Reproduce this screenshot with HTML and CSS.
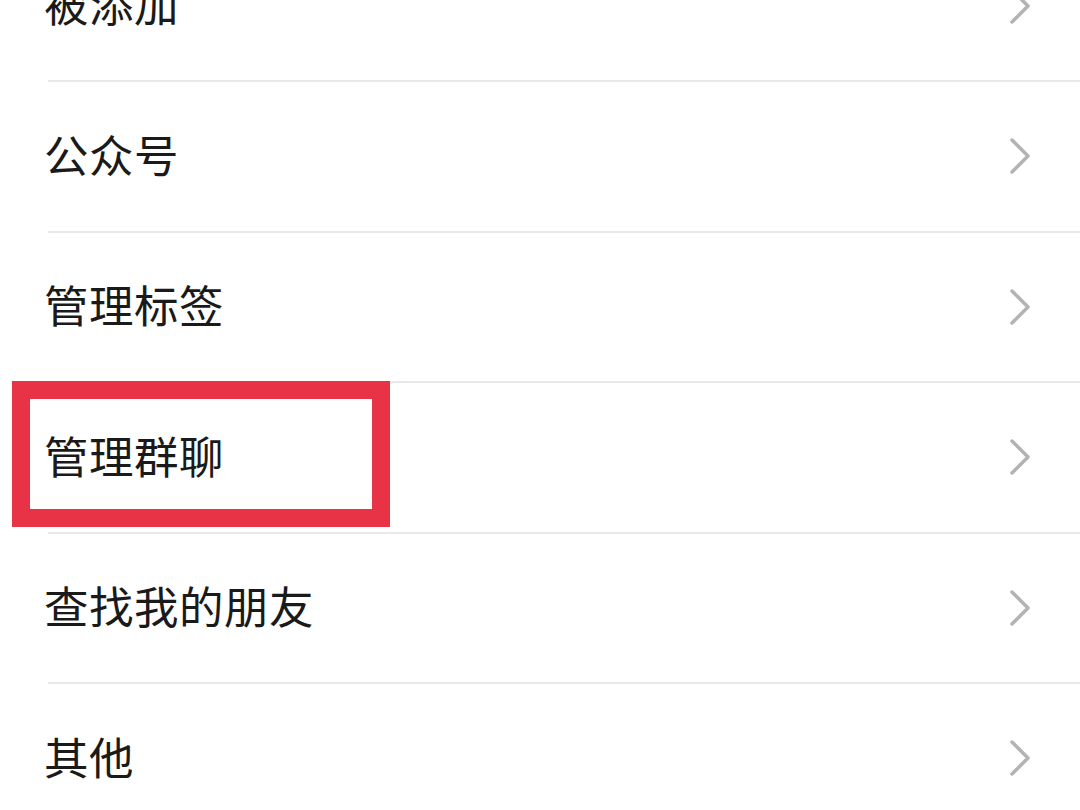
FILE: index.html
```html
<!DOCTYPE html>
<html lang="zh-CN">
<head>
    <meta charset="UTF-8">
    <meta name="viewport" content="width=device-width, initial-scale=1.0">
    <title>通讯录设置</title>
    <link rel="stylesheet" href="styles.css">
</head>
<body>
    <ul class="menu">
        <li class="item">
            <span class="label">被添加</span>
            <svg class="arrow" viewBox="0 0 20 36"><polyline points="2,2 18,18 2,34"/></svg>
        </li>
        <li class="item">
            <span class="label">公众号</span>
            <svg class="arrow" viewBox="0 0 20 36"><polyline points="2,2 18,18 2,34"/></svg>
        </li>
        <li class="item">
            <span class="label">管理标签</span>
            <svg class="arrow" viewBox="0 0 20 36"><polyline points="2,2 18,18 2,34"/></svg>
        </li>
        <li class="item">
            <span class="label">管理群聊</span>
            <svg class="arrow" viewBox="0 0 20 36"><polyline points="2,2 18,18 2,34"/></svg>
            <div class="highlight"></div>
        </li>
        <li class="item">
            <span class="label">查找我的朋友</span>
            <svg class="arrow" viewBox="0 0 20 36"><polyline points="2,2 18,18 2,34"/></svg>
        </li>
        <li class="item">
            <span class="label">其他</span>
            <svg class="arrow" viewBox="0 0 20 36"><polyline points="2,2 18,18 2,34"/></svg>
        </li>
    </ul>
</body>
</html>
```

FILE: styles.css
```css
html, body {
    margin: 0;
    padding: 0;
    background: #ffffff;
    overflow: hidden;
}
body {
    font-family: "Noto Sans CJK SC", "Noto Sans", sans-serif;
    color: #1a1a1a;
}
.menu {
    list-style: none;
    margin: -68.5px 0 0 0;
    padding: 0;
}
.item {
    position: relative;
    display: flex;
    align-items: center;
    justify-content: space-between;
    height: 148.5px;
    padding: 0 50px 0 44px;
}
.item::after {
    content: "";
    position: absolute;
    left: 48px;
    right: 0;
    bottom: -2px;
    height: 2px;
    background: #e8e8e8;
}
.item + .item {
    margin-top: 2px;
}
.label {
    font-size: 44.5px;
    line-height: 1;
    letter-spacing: 0.5px;
    margin-bottom: 5px;
}
.arrow {
    width: 20px;
    height: 36px;
}
.arrow polyline {
    fill: none;
    stroke: #b3b3b3;
    stroke-width: 3.5;
    stroke-linecap: round;
    stroke-linejoin: round;
}
.highlight {
    position: absolute;
    left: 12px;
    top: -2px;
    width: 342px;
    height: 110px;
    border: 18px solid #e83346;
}
```
